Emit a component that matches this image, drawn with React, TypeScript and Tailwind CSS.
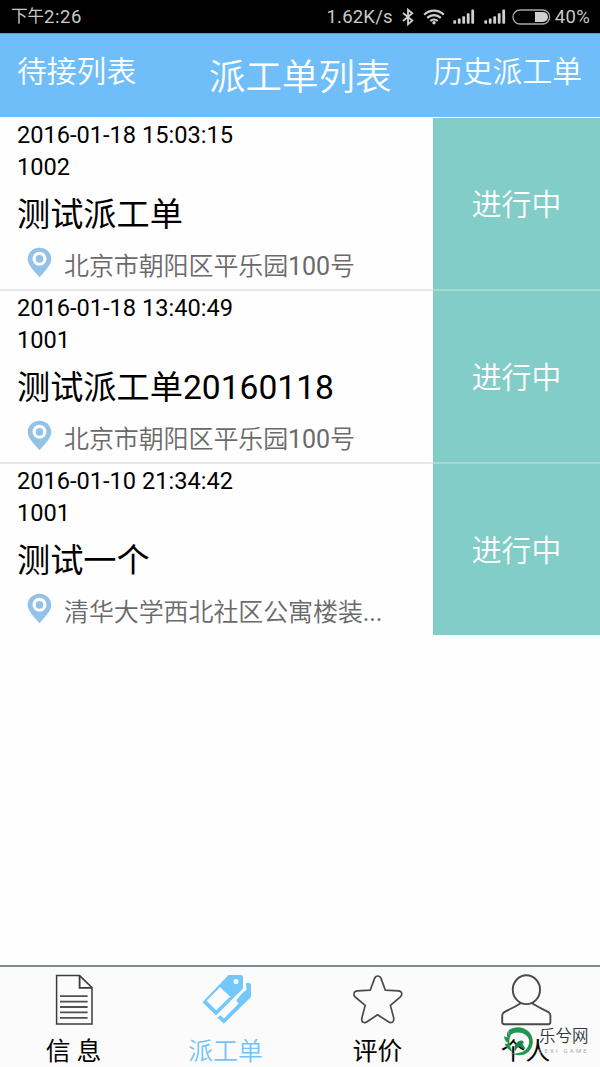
import React from 'react';

const orders = [
  { time: '2016-01-18 15:03:15', no: '1002', title: '测试派工单', address: '北京市朝阳区平乐园100号' },
  { time: '2016-01-18 13:40:49', no: '1001', title: '测试派工单20160118', address: '北京市朝阳区平乐园100号' },
  { time: '2016-01-10 21:34:42', no: '1001', title: '测试一个', address: '清华大学西北社区公寓楼装...' },
];

function Bluetooth() {
  return (
    <svg className="ml-[8px] h-[18px] w-[14px]" viewBox="0 0 14 18" fill="none" stroke="#cfcfcf" strokeWidth="1.8">
      <path d="M2 5 L11.3 12.6 L7 16.3 V1.7 L11.3 5.2 L2 13" />
    </svg>
  );
}

function Wifi() {
  return (
    <svg className="ml-[8px] h-[16px] w-[22px]" viewBox="0 0 22 16" fill="none" stroke="#cfcfcf" strokeWidth="2.2">
      <path d="M1.2 5.6 C6.8 .2 15.2 .2 20.8 5.6" />
      <path d="M4.2 8.9 C8.2 5.1 13.8 5.1 17.8 8.9" />
      <path d="M7.3 12 C9.4 10 12.6 10 14.7 12" />
      <circle cx="11" cy="13.8" r="1.7" fill="#cfcfcf" stroke="none" />
    </svg>
  );
}

function Signal() {
  return (
    <svg className="ml-[8.5px] h-[15px] w-[22px]" viewBox="0 0 22 15" fill="#cfcfcf">
      <rect x="0.3" y="11.2" width="2.8" height="3.6" rx=".8" />
      <rect x="4.8" y="9.6" width="2.8" height="5.2" rx=".8" />
      <rect x="9.3" y="7.2" width="2.8" height="7.6" rx=".8" />
      <rect x="13.8" y="4.2" width="2.8" height="10.6" rx=".8" />
      <rect x="18.3" y="0.6" width="2.8" height="14.2" rx=".8" />
    </svg>
  );
}

function Battery() {
  return (
    <svg className="ml-[6px] h-[16px] w-[39px]" viewBox="0 0 39 16">
      <rect x="1" y="1" width="36.6" height="14" rx="7" fill="none" stroke="#a8a8a8" strokeWidth="1.3" />
      <path d="M23 3 H31 A5 5 0 0 1 31 13 H23 Z" fill="#cfcfcf" />
    </svg>
  );
}

function Pin() {
  return (
    <svg className="-mt-[5px] h-[31px] w-[25px] shrink-0" viewBox="0 0 25 31">
      <path
        d="M12.5 .7 C5.8 .7 .7 5.7 .7 12 C.7 17.5 5.2 22 12.5 30.3 C19.8 22 24.3 17.5 24.3 12 C24.3 5.7 19.2 .7 12.5 .7 Z M12.5 4.8 A7 7 0 1 1 12.5 18.8 A7 7 0 1 1 12.5 4.8 Z"
        fill="#93c2e9"
        fillRule="evenodd"
      />
      <circle cx="12.5" cy="11.9" r="3.8" fill="#93c2e9" />
    </svg>
  );
}

function DocIcon() {
  return (
    <svg className="h-[52px] w-[52px] shrink-0" viewBox="0 0 52 52" fill="none" stroke="#3c3c3c" strokeWidth="1.5">
      <path d="M8.6 1.6 H31.6 L44 13.6 V50 H8.6 Z" />
      <path d="M31.6 1.6 V13.8 H44" strokeWidth="1.8" />
      <path d="M12 22.2 H39.6 M12 27.6 H39.6 M12 33 H39.6 M12 38.4 H39.6 M12 43.8 H39.6" stroke="#505050" strokeWidth="1.8" />
    </svg>
  );
}

function TagsIcon() {
  return (
    <svg className="h-[52px] w-[52px] shrink-0" viewBox="0 0 52 52">
      <path
        d="M28.5 1 H41 Q43 1 43 3 V14.6 L16 41.6 L2.4 28.2 Z M20.2 13 L6.6 26.8 L16.2 36.2 L30.6 22.2 Q28 22 27.4 20 Q26.4 18.6 24.6 17.8 Z M36 5 A2.5 2.5 0 1 0 36 10 A2.5 2.5 0 1 0 36 5 Z"
        fill="#74c7fa"
        fillRule="evenodd"
      />
      <path
        d="M45.8 9 H49 Q51 9 51 11 V23 L23.8 49.8 L17.6 43.8 L20 41.2 L24 44.4 L38.6 29.4 L36.2 26.6 L41 20.4 L46.6 15.6 Z"
        fill="#74c7fa"
      />
    </svg>
  );
}

function StarIcon() {
  return (
    <svg className="h-[52px] w-[52px] shrink-0" viewBox="0 0 52 52" fill="none" stroke="#4a4a4a" strokeWidth="1.7" strokeLinejoin="round">
      <path d="M22.6 4.4 Q23.4 2 25.8 2 Q28.2 2 29 4.4 L33.4 16.2 L46.4 16.9 Q49.2 17.2 49.8 19.4 Q50 21.4 48.4 22.8 L38.4 31.4 L41.8 44.2 Q42.2 47 40.2 48.2 Q38.4 49 36.4 47.8 L25.6 40.8 L15 47.8 Q13 49 11.2 48.2 Q9.2 47 9.8 44.2 L13.2 31.4 L3.2 23 Q1.4 21.4 2 19.4 Q2.6 17.2 5.4 16.9 L18.2 16.2 Z" />
    </svg>
  );
}

function PersonIcon() {
  return (
    <svg className="h-[52px] w-[52px] shrink-0" viewBox="0 0 52 52" fill="none" stroke="#4a4a4a" strokeWidth="1.9" strokeLinejoin="round">
      <ellipse cx="26.4" cy="15.7" rx="13.6" ry="14.4" />
      <path d="M20.6 29.2 C16 32.6 9 35.2 3.8 38.4 Q2.2 39.6 2.2 41.6 V48 Q2.2 50.2 4.4 50.2 H48.2 Q50.4 50.2 50.4 48 V41.6 Q50.4 39.6 48.8 38.4 C43.6 35.2 36.8 32.6 32.2 29.2" />
    </svg>
  );
}

function Watermark() {
  return (
    <div className="absolute bottom-[9px] left-[503px] flex h-[34px] items-center">
      <svg className="h-[31px] w-[32px]" viewBox="0 0 32 31">
        <path d="M6 4 C15 -2.5 29.8 3 29.8 15.4 C29.8 27.5 17 33 7 26.5 C16 29.5 26 25 26.2 15.6 C26.2 8 16 4.6 9.6 7.6 C8 8.4 6.8 9.6 6 11 C5 9 5 6 6 4 Z" fill="#22964f" />
        <path d="M6 4.4 C4 7 5 9.4 8 9.6 C5.4 12.6 6 19.6 9.4 25.6 C5.6 24.6 2.4 20.6 1.6 17.6 C3 18.2 4.4 18 5 17 C2.4 15.4 .8 12.4 1.2 10 C2.2 11 3.4 11.4 4.6 11.2 C3.4 9 3.6 6 6 4.4 Z" fill="#22964f" />
        <path d="M12 25.6 C10.4 21 12.6 15.4 18 14.4 C20 14.2 21.2 15.8 20.6 17.6 L19.4 17 C20.2 19.4 21 21 22.6 22 C20.6 23.4 18 22.6 17.4 20.2 C15 20.4 13.4 22.6 12 25.6 Z" fill="#16864a" />
      </svg>
      <div className="ml-[4px] flex flex-col">
        <span className="h-[22px] text-[16.5px] font-[350] leading-[22px] text-[#303936]">乐兮网</span>
        <span className="h-[9px] whitespace-nowrap text-[6px] leading-[6px] tracking-[2.2px] text-[#a9aeab]">LEXI GAME</span>
      </div>
    </div>
  );
}

const tabs = [
  { label: '信 息', Icon: DocIcon, width: 'w-[147px]' },
  { label: '派工单', Icon: TagsIcon, active: true, width: 'w-[157px]' },
  { label: '评价', Icon: StarIcon, width: 'w-[147px]' },
  { label: '个人', Icon: PersonIcon, width: 'w-[149px]' },
];

export default function App() {
  return (
    <div className="relative flex h-[1067px] w-[600px] flex-col overflow-hidden bg-[#fefefe] font-['Roboto','Noto_Sans_CJK_SC',sans-serif] text-black">
      <div className="flex h-[33px] shrink-0 items-center bg-black pl-[11px] pr-[10px] text-[#c9c9c9]">
        <span className="pt-[2px] text-[16.5px]">下午</span>
        <span className="pt-[2px] text-[18.5px] tracking-[0.6px]">2:26</span>
        <span className="ml-auto pt-[2px] text-[18.5px] tracking-[0.2px]">1.62K/s</span>
        <Bluetooth />
        <Wifi />
        <Signal />
        <Signal />
        <Battery />
        <span className="ml-[4px] pt-[2px] text-[18.5px] tracking-[0.3px]">40%</span>
      </div>

      <header className="flex h-[84px] shrink-0 items-start border-t border-[#5f9fd0] bg-[#70bef9] font-[350] text-white">
        <span className="w-[192px] pl-[17px] pt-[18px] text-[29.8px] leading-[40px]">待接列表</span>
        <h1 className="w-[241px] pl-[17px] pt-[21px] text-[36.5px] font-[350] leading-[46px]">派工单列表</h1>
        <span className="pt-[18px] text-[29.8px] leading-[40px]">历史派工单</span>
      </header>

      <main className="flex-1 pt-px">
        {orders.map((o, i) => (
          <div key={i} className={`flex ${i < 2 ? 'h-[173px]' : 'h-[171px]'}`}>
            <div className={`flex w-[433px] flex-col pl-[17px] ${i < 2 ? 'border-b-2 border-[#e6e6e6]' : ''}`}>
              <div className="h-[32px] text-[23.6px] leading-[35px]">{o.time}</div>
              <div className="h-[32px] text-[23.6px] leading-[35px]">{o.no}</div>
              <div className="h-[60px] text-[33.2px] leading-[65px]">
                {o.title.replace(/\d+$/, '')}
                <span className="text-[33.6px]">{o.title.match(/\d+$/)?.[0]}</span>
              </div>
              <div className="flex h-[46px] items-center pl-[10px] text-[25px] text-[#6a6a6a]">
                <Pin />
                <span className="ml-[12px] whitespace-nowrap pt-[4px] font-[350] tracking-[-0.1px]">
                  {o.address.split(/(\d+|\.+)/).map((part, k) => (
                    <span key={k} className={k % 2 ? 'font-normal' : ''}>{part}</span>
                  ))}
                </span>
              </div>
            </div>
            <div className={`flex flex-1 items-center justify-center bg-[#82cdc7] pt-[4px] text-[29.8px] font-[350] text-white ${i < 2 ? 'border-b-2 border-[#a9d8d2]' : ''}`}>
              进行中
            </div>
          </div>
        ))}
      </main>

      <nav className="flex h-[102px] shrink-0 border-t-2 border-[#7c8894] bg-[#fbfbfb]">
        {tabs.map(({ label, Icon, active, width }) => (
          <div key={label} className={`flex shrink-0 flex-col items-center pt-[7px] ${width} ${active ? 'font-[350] text-[#74c3fa]' : ''}`}>
            <Icon />
            <span className="mt-[8px] shrink-0 text-[24.8px] leading-[36px]">{label}</span>
          </div>
        ))}
      </nav>
      <Watermark />
    </div>
  );
}
